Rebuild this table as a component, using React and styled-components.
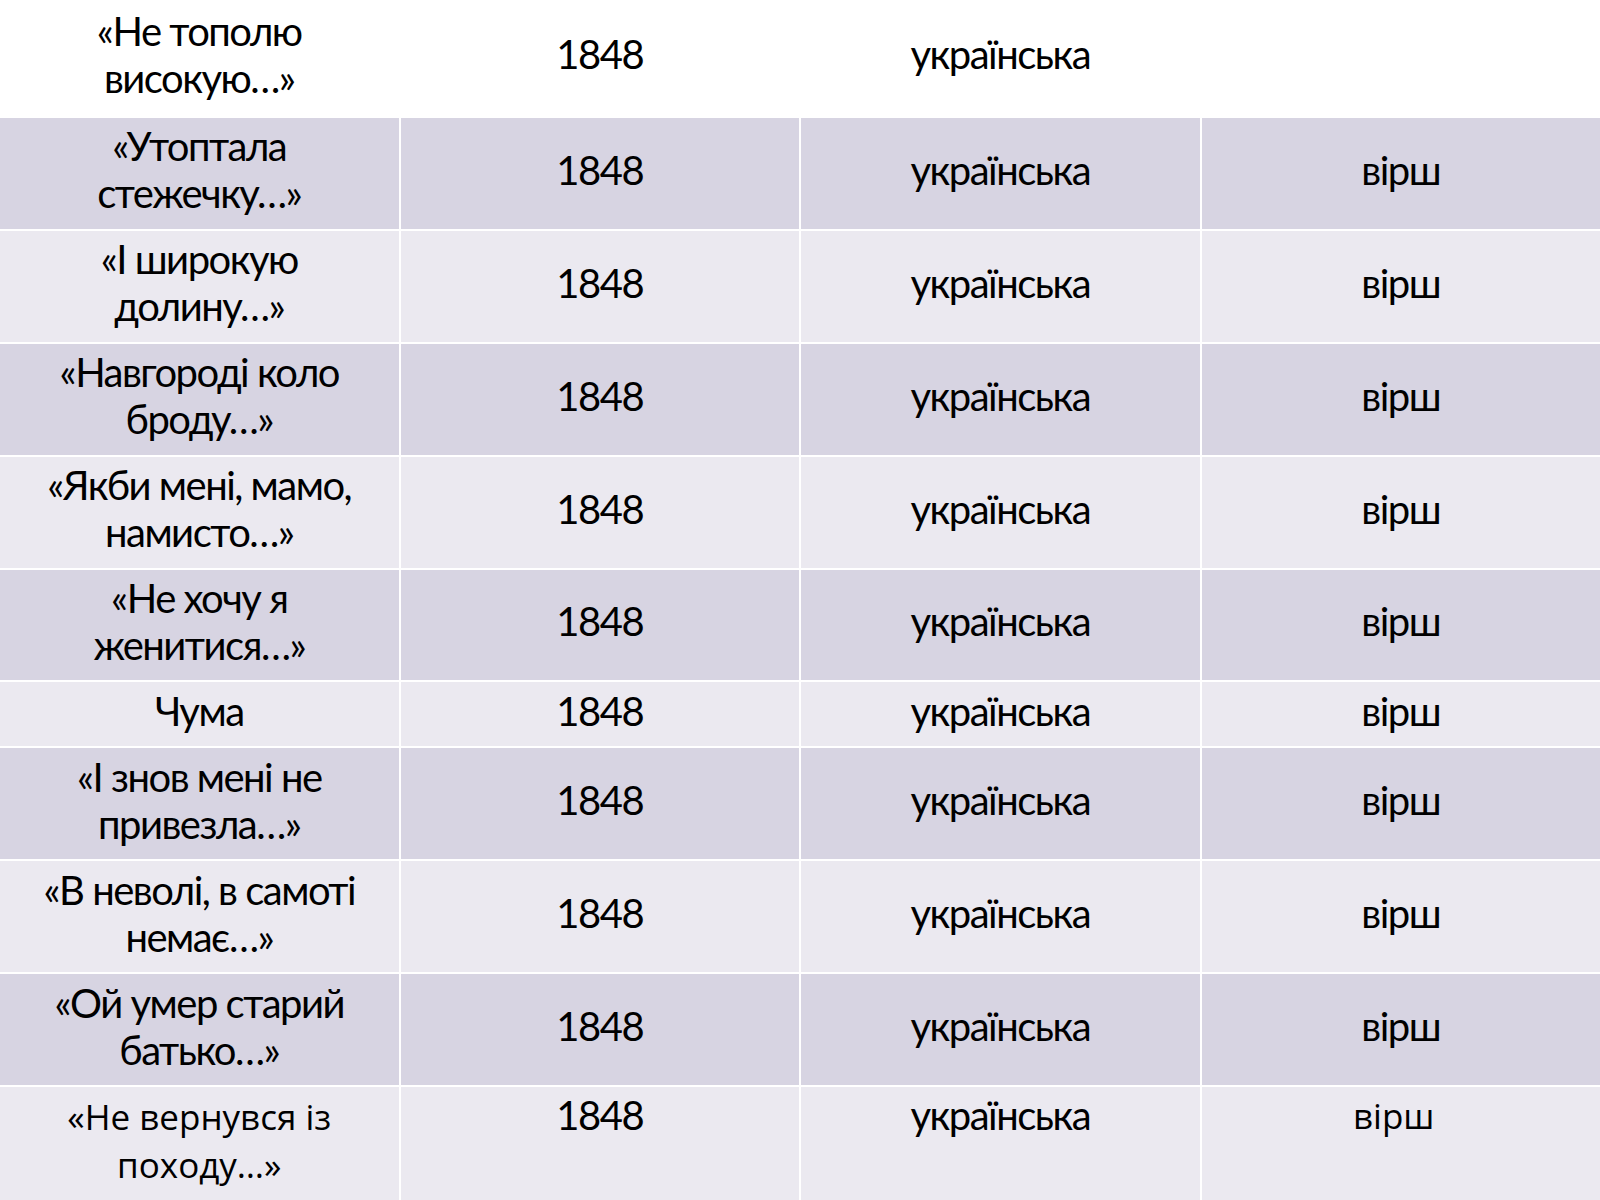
import React from 'react'
import styled, { createGlobalStyle } from 'styled-components'

const GlobalStyle = createGlobalStyle`
  html, body {
    margin: 0;
    padding: 0;
    background: #fff;
  }
  body {
    font-family: "Lato", "Liberation Sans", sans-serif;
    color: #000;
  }
`

const shades = {
  white: '#ffffff',
  dark: '#d7d4e2',
  light: '#ebe9f0'
}

const Table = styled.div`
  width: 1600px;
  height: 1200px;
  overflow: hidden;
  display: grid;
  grid-template-columns: repeat(4, 1fr);
  column-gap: 2px;
  row-gap: 2px;
  background: #fff;
`

const Cell = styled.div`
  background: ${p => shades[p.$shade]};
  min-height: ${p => (p.$tall ? '115px' : 'auto')};
  box-sizing: border-box;
  padding: 5px 10px 11px;
  padding-right: ${p => (p.$shiftLeft ? '24px' : '10px')};
  display: flex;
  align-items: ${p => (p.$top ? 'flex-start' : 'center')};
  justify-content: center;
  text-align: center;
  font-size: 40px;
  line-height: 47px;
  letter-spacing: -1.5px;
`

const Wide = styled.span`
  font-family: "Open Sans", "Noto Sans", sans-serif;
  font-size: 35px;
  line-height: 47px;
  letter-spacing: 0;
`

const rows = [
  { title: ['«Не тополю', 'високую…»'], kind: '' },
  { title: ['«Утоптала', 'стежечку…»'], kind: 'вірш' },
  { title: ['«І широкую', 'долину…»'], kind: 'вірш' },
  { title: ['«Навгороді коло', 'броду…»'], kind: 'вірш' },
  { title: ['«Якби мені, мамо,', 'намисто…»'], kind: 'вірш' },
  { title: ['«Не хочу я', 'женитися…»'], kind: 'вірш' },
  { title: ['Чума'], kind: 'вірш' },
  { title: ['«І знов мені не', 'привезла…»'], kind: 'вірш' },
  { title: ['«В неволі, в самоті', 'немає…»'], kind: 'вірш' },
  { title: ['«Ой умер старий', 'батько…»'], kind: 'вірш' },
  { title: ['«Не вернувся із', 'походу…»'], kind: 'вірш', last: true }
]

const Lines = ({ lines }) =>
  lines.map((l, i) => (
    <React.Fragment key={i}>
      {i > 0 && <br />}
      {l}
    </React.Fragment>
  ))

export default function App() {
  return (
    <>
      <GlobalStyle />
      <Table>
        {rows.map((r, i) => {
          const shade = i === 0 ? 'white' : i % 2 === 1 ? 'dark' : 'light'
          const top = !!r.last
          const tall = i === 0
          return (
            <React.Fragment key={i}>
              <Cell $shade={shade} $top={top} $tall={tall}>
                <div>
                  {r.last ? (
                    <Wide>
                      <Lines lines={r.title} />
                    </Wide>
                  ) : (
                    <Lines lines={r.title} />
                  )}
                </div>
              </Cell>
              <Cell $shade={shade} $top={top} $tall={tall}>1848</Cell>
              <Cell $shade={shade} $top={top} $tall={tall}>українська</Cell>
              <Cell $shade={shade} $top={top} $tall={tall} $shiftLeft={r.last}>
                {r.last ? <Wide>{r.kind}</Wide> : r.kind}
              </Cell>
            </React.Fragment>
          )
        })}
      </Table>
    </>
  )
}
